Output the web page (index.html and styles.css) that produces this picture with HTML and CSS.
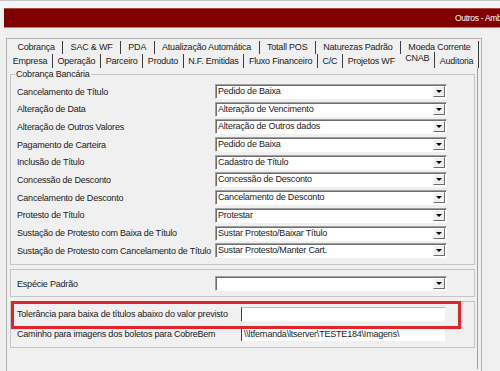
FILE: index.html
```html
<!DOCTYPE html>
<html>

<head>
    <meta charset="utf-8">
    <title>Outros - Ambiente</title>
    <link rel="stylesheet" href="styles.css">
</head>

<body>
    <div class="top-strip"></div>
    <div class="title-bar"><span class="title-text">Outros - Ambiente de Trabalho</span></div>

    <div class="frame">
        <div class="tab-row tab-row-back">
            <span class="tab">Cobrança</span>
            <span class="tab">SAC &amp; WF</span>
            <span class="tab">PDA</span>
            <span class="tab">Atualização Automática</span>
            <span class="tab">Totall POS</span>
            <span class="tab">Naturezas Padrão</span>
            <span class="tab">Moeda Corrente</span>
        </div>
        <div class="tab-row tab-row-front">
            <span class="tab">Empresa</span>
            <span class="tab">Operação</span>
            <span class="tab">Parceiro</span>
            <span class="tab">Produto</span>
            <span class="tab">N.F. Emitidas</span>
            <span class="tab">Fluxo Financeiro</span>
            <span class="tab">C/C</span>
            <span class="tab">Projetos WF</span>
            <span class="tab active">CNAB</span>
            <span class="tab">Auditoria</span>
        </div>

        <div class="tab-page">
            <fieldset class="group">
                <legend>Cobrança Bancária</legend>
                <div class="field-grid">
                    <label>Cancelamento de Título</label>
                    <div class="combo"><span class="combo-value">Pedido de Baixa</span><span class="combo-btn"></span></div>

                    <label>Alteração de Data</label>
                    <div class="combo"><span class="combo-value">Alteração de Vencimento</span><span class="combo-btn"></span></div>

                    <label>Alteração de Outros Valores</label>
                    <div class="combo"><span class="combo-value">Alteração de Outros dados</span><span class="combo-btn"></span></div>

                    <label>Pagamento de Carteira</label>
                    <div class="combo"><span class="combo-value">Pedido de Baixa</span><span class="combo-btn"></span></div>

                    <label>Inclusão de Título</label>
                    <div class="combo"><span class="combo-value">Cadastro de Título</span><span class="combo-btn"></span></div>

                    <label>Concessão de Desconto</label>
                    <div class="combo"><span class="combo-value">Concessão de Desconto</span><span class="combo-btn"></span></div>

                    <label>Cancelamento de Desconto</label>
                    <div class="combo"><span class="combo-value">Cancelamento de Desconto</span><span class="combo-btn"></span></div>

                    <label>Protesto de Título</label>
                    <div class="combo"><span class="combo-value">Protestar</span><span class="combo-btn"></span></div>

                    <label>Sustação de Protesto com Baixa de Título</label>
                    <div class="combo"><span class="combo-value">Sustar Protesto/Baixar Título</span><span class="combo-btn"></span></div>

                    <label>Sustação de Protesto com Cancelamento de Título</label>
                    <div class="combo"><span class="combo-value">Sustar Protesto/Manter Cart.</span><span class="combo-btn"></span></div>
                </div>
            </fieldset>

            <fieldset class="group group-plain">
                <div class="field-grid">
                    <label>Espécie Padrão</label>
                    <div class="combo"><span class="combo-value"></span><span class="combo-btn"></span></div>
                </div>
            </fieldset>

            <fieldset class="group group-paths">
                <div class="field-grid path-grid">
                    <label>Tolerância para baixa de títulos abaixo do valor previsto</label>
                    <div class="text-box"></div>

                    <label>Caminho para imagens dos boletos para CobreBem</label>
                    <div class="text-box">\\ltfernanda\ltserver\TESTE184\Imagens\</div>
                </div>
                <div class="highlight"></div>
            </fieldset>
        </div>
    </div>
</body>

</html>
```

FILE: styles.css
```css
body {
    margin: 0;
    height: 371px;
    overflow: hidden;
    background: #f0f0f0;
    font-family: "Liberation Sans", Arial, sans-serif;
    font-size: 9px;
    letter-spacing: -0.2px;
    color: #1a1a1a;
}

.top-strip {
    height: 8px;
    box-sizing: border-box;
    border-top: 1px solid #c4c4c4;
    background: #f5f5f5;
}

.title-bar {
    height: 20px;
    margin-left: 4px;
    box-sizing: border-box;
    padding-left: 451px;
    background: #800000;
    border-top: 1px solid #a84848;
    border-bottom: 1px solid #c08080;
    color: #fff;
    font-size: 8.5px;
    letter-spacing: -0.3px;
    line-height: 18px;
    white-space: nowrap;
    overflow: hidden;
}

.frame {
    width: 476px;
    height: 333px;
    margin: 10px 0 0 6px;
    box-sizing: border-box;
    padding-top: 2px;
    border: 1px solid #b0b0b0;
    border-bottom: none;
}

/* tabs */

.tab-row {
    display: flex;
    padding: 0 2px 0 3px;
}

.tab-row-front {
    padding-left: 1px;
}

.tab {
    flex: 1 1 auto;
    padding: 0 4px;
    text-align: center;
    line-height: 13px;
    white-space: nowrap;
    border-right: 1px solid #3c3c3c;
}

.tab-row-front .tab {
    line-height: 14px;
}

.tab:has(+ .active) {
    border-right-color: transparent;
}

.tab.active {
    margin-top: -2px;
    padding-bottom: 2px;
    line-height: 12px;
}

.tab-page {
    height: 300px;
    margin-right: 3px;
    padding: 1px 2px 0 3px;
    border-right: 1px solid #a0a0a0;
}

/* group boxes */

.group {
    position: relative;
    margin: 0;
    padding: 4px 6px 6px;
    min-width: 0;
    border: 1px solid #c5c5c5;
}

.group legend {
    margin-left: -2px;
    padding: 0 1px;
    line-height: 11px;
}

.group-plain {
    margin-top: 4px;
    padding: 6px 6px 5px;
}

.group-paths {
    margin-top: 4px;
    padding: 5px 6px 6px;
}

.field-grid {
    display: grid;
    grid-template-columns: 198px 232px;
    grid-auto-rows: 15px;
    row-gap: 2.7px;
    align-items: center;
}

.field-grid label {
    white-space: nowrap;
}

.path-grid {
    grid-template-columns: 224px 204px;
    grid-auto-rows: 14px;
    row-gap: 6px;
}

/* controls */

.combo {
    display: flex;
    height: 15px;
    box-sizing: border-box;
    background: #fff;
    border: 1px solid;
    border-color: #a0a0a0 #fff #fff #a0a0a0;
    box-shadow: inset 1px 1px 0 #6e6e6e;
}

.combo-value {
    flex: 1;
    padding-left: 2px;
    line-height: 13px;
    white-space: nowrap;
    overflow: hidden;
}

.combo-btn {
    display: flex;
    align-items: center;
    justify-content: center;
    width: 12px;
    margin: 1px 1px 1px 0;
    box-sizing: border-box;
    background: #f0f0f0;
    border: 1px solid;
    border-color: #fff #6e6e6e #6e6e6e #fff;
}

.combo-btn::after {
    content: "";
    border-left: 3px solid transparent;
    border-right: 3px solid transparent;
    border-top: 3px solid #000;
}

.text-box {
    height: 14px;
    box-sizing: border-box;
    padding-left: 2px;
    background: #fff;
    border-left: 1px solid #404040;
    border-top: 1px solid #b8b8b8;
    line-height: 12px;
    white-space: nowrap;
    overflow: hidden;
}

/* annotation drawn over the tolerance row */

.highlight {
    position: absolute;
    left: 0;
    top: -1px;
    width: 450px;
    height: 28px;
    box-sizing: border-box;
    border: 3px solid #e0242c;
}
```
